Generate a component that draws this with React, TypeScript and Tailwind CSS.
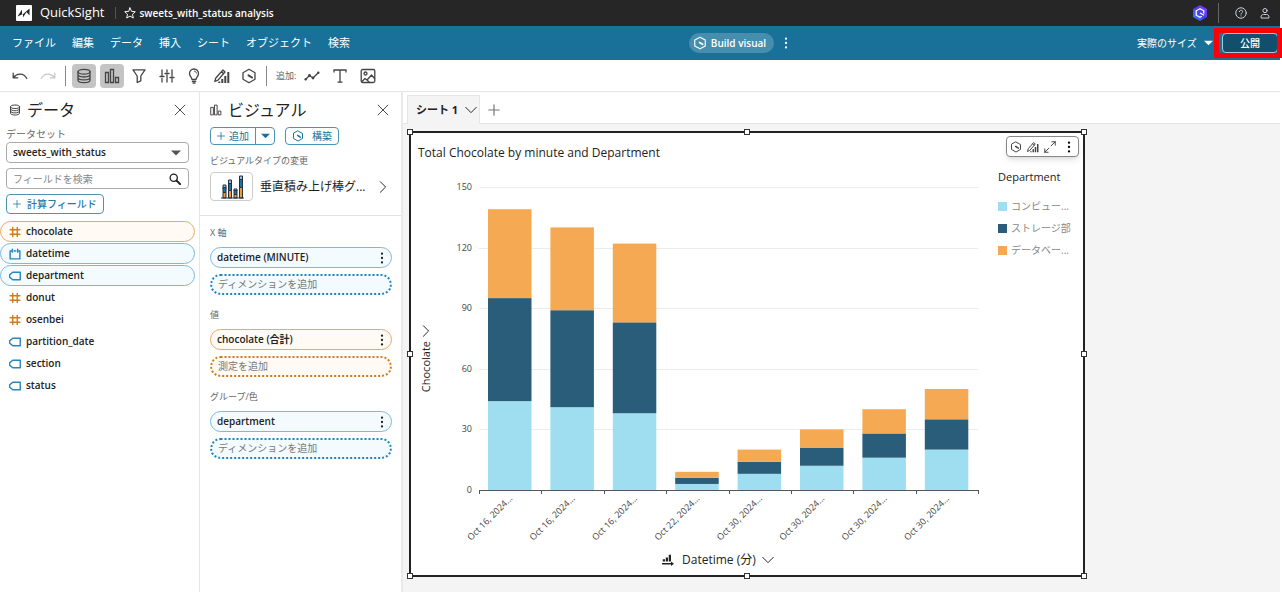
import type { ReactNode } from 'react';

interface IconProps {
  className?: string;
}

function Svg({ className = 'w-4 h-4', children }: IconProps & { children: ReactNode }) {
  return (
    <svg
      viewBox="0 0 16 16"
      className={className}
      fill="none"
      stroke="currentColor"
      strokeWidth="1.3"
      strokeLinecap="round"
      strokeLinejoin="round"
      aria-hidden="true"
    >
      {children}
    </svg>
  );
}

const UndoIcon = () => (
  <Svg>
    <path d="M1.2 5.2v4.6h4.6M1.5 9.5C4.5 5.5 11.5 4 14.8 10.5" />
  </Svg>
);

const RedoIcon = () => (
  <Svg>
    <path d="M14.8 5.2v4.6h-4.6M14.5 9.5C11.5 5.5 4.5 4 1.2 10.5" />
  </Svg>
);

const DatabaseIcon = ({ className }: IconProps) => (
  <Svg className={className}>
    <ellipse cx="8" cy="3.7" rx="6" ry="2.4" />
    <path d="M2 3.7v8.6c0 1.3 2.7 2.4 6 2.4s6-1.1 6-2.4V3.7M2 6.6C2 7.9 4.7 9 8 9s6-1.1 6-2.4M2 9.5c0 1.3 2.7 2.4 6 2.4s6-1.1 6-2.4" />
  </Svg>
);

const BarsIcon = ({ className }: IconProps) => (
  <Svg className={className}>
    <path d="M1.5 4.5h3v10h-3zM6.500 1.500h3v13h-3zM11.500 9.500h3v5h-3z" strokeLinejoin="miter" />
  </Svg>
);

const FilterIcon = () => (
  <Svg>
    <path d="M2 1.8h12L9.8 8v4.8l-3.6 1.7V8z" />
  </Svg>
);

const SlidersIcon = () => (
  <Svg>
    <path d="M3 2v5.500M3 10.500V14M1 8.500h4M8 2v2M8 7v7M6 5.500h4M13 2v6M13 11v3M11 9.500h4" />
  </Svg>
);

const BulbIcon = () => (
  <Svg>
    <path d="M6 11.500C6 9.500 3.500 8.500 3.500 5.500a4.500 4.500 0 0 1 9 0c0 3-2.500 4-2.500 6zM6.300 13.300h3.400M7 15h2" />
    <path d="M8.500 3.200c1 .1 1.700.8 1.900 1.800" strokeWidth="1" />
  </Svg>
);

const PencilChartIcon = ({ className }: IconProps) => (
  <Svg className={className}>
    <path d="M.8 13.500l1-3.500L9 2l2 2-7 8.200zM7.500 3.700l2 2" />
    <path d="M14.300 4v11M11.300 8v7M8.300 11v4M5.300 13.500V15" strokeWidth="2" strokeLinecap="butt" />
  </Svg>
);

const HexIcon = ({ className }: IconProps) => (
  <Svg className={className}>
    <path d="M8 1.300l6 3.400v6.600l-6 3.400-6-3.400V4.700z" />
    <path d="M7.500 7.300l3.500 2.200" strokeWidth="2" />
  </Svg>
);

const LineIcon = () => (
  <Svg>
    <path d="M1.500 11.500l4-4 3.500 2.500 5.500-5.500" />
    <g fill="currentColor" stroke="none">
      <circle cx="1.700" cy="11.300" r="1.200" />
      <circle cx="5.500" cy="7.500" r="1.400" />
      <circle cx="9" cy="10" r="1.400" />
      <circle cx="14.300" cy="4.700" r="1.200" />
    </g>
  </Svg>
);

const TypeIcon = () => (
  <Svg>
    <path d="M2 4.500V2h12v2.500M8 2v12.200M5.500 14.200h5" strokeLinecap="butt" strokeLinejoin="miter" />
  </Svg>
);

const ImageIcon = () => (
  <Svg>
    <rect x="1.200" y="1.500" width="13.600" height="13" rx="1.500" />
    <circle cx="5.500" cy="5.500" r="1.500" />
    <path d="M2 13.500l3-3 2 1.500L11.500 7l3 3.500M7 12l2 2" />
  </Svg>
);

const CloseIcon = () => (
  <Svg className="w-3 h-3">
    <path d="M1.500 1.500l13 13M14.500 1.500l-13 13" />
  </Svg>
);

const PlusIcon = ({ className = 'w-3 h-3' }: IconProps) => (
  <Svg className={className}>
    <path d="M8 1v14M1 8h14" strokeWidth="1.600" />
  </Svg>
);

const ChevronDown = () => (
  <Svg className="w-3 h-3">
    <path d="M1 4.500l7 7 7-7" />
  </Svg>
);

const ChevronRight = () => (
  <Svg className="w-3 h-3">
    <path d="M4.500 1l7 7-7 7" />
  </Svg>
);

const CaretDown = ({ className }: IconProps) => (
  <svg viewBox="0 0 10 6" className={className} fill="currentColor" aria-hidden="true">
    <path d="M0 .5h10L5 5.500z" />
  </svg>
);

const DotsIcon = ({ className = 'w-4 h-4' }: IconProps) => (
  <svg viewBox="0 0 16 16" className={className} fill="currentColor" aria-hidden="true">
    <circle cx="8" cy="3" r="1.300" />
    <circle cx="8" cy="8" r="1.300" />
    <circle cx="8" cy="13" r="1.300" />
  </svg>
);

const ExpandIcon = () => (
  <Svg className="w-3 h-3">
    <path d="M9.500 6.500L15 1M10.500 1H15v4.500M6.500 9.500L1 15M5.500 15H1v-4.500" />
  </Svg>
);

const SearchIcon = () => (
  <Svg className="w-3 h-3">
    <circle cx="6.300" cy="6.300" r="4.800" strokeWidth="1.800" />
    <path d="M10 10l5 5" strokeWidth="2.400" />
  </Svg>
);

const HashIcon = () => (
  <Svg className="w-3 h-3 text-[#d17c1b]">
    <path d="M5 2v12M11 2v12M1.500 5h13M1.500 11h13" strokeWidth="1.900" />
  </Svg>
);

const CalendarIcon = () => (
  <Svg className="w-3 h-3 text-[#2a86bd]">
    <path d="M4.500 4H1.500v10.500h13V4h-3M7 4h2M4.500 1.500v4M11.500 1.500v4" strokeWidth="1.900" />
  </Svg>
);

const TagIcon = () => (
  <Svg className="w-3 h-3 text-[#2a86bd]">
    <path d="M5 3h10v10H5L.8 9.500v-3z" strokeWidth="1.900" />
  </Svg>
);

const LogoIcon = () => (
  <svg viewBox="0 0 16 16" className="w-4 h-4" aria-hidden="true">
    <rect width="16" height="16" rx="1" fill="#fff" />
    <path d="M1.500 11.500L6 4.500v5.500l7.500-6.500v7l-3-3.500-3.500 5.500V9z" fill="#262626" />
  </svg>
);

const StarIcon = () => (
  <Svg className="w-3 h-3">
    <path d="M8 1.200l2.100 4.600 4.900.5-3.700 3.400 1.100 5L8 12.100l-4.400 2.600 1.100-5L1 6.300l4.900-.5z" />
  </Svg>
);

const AssistantIcon = () => (
  <svg viewBox="0 0 16 16" className="w-4 h-4" fill="none" aria-hidden="true">
    <defs>
      <linearGradient id="assistant" x1="0" y1="1" x2="1" y2="0">
        <stop offset="0" stopColor="#2f8bff" />
        <stop offset="0.500" stopColor="#4a3df0" />
        <stop offset="1" stopColor="#8a3dfa" />
      </linearGradient>
    </defs>
    <path d="M8 0l7 4v8l-7 4-7-4V4z" fill="url(#assistant)" />
    <path d="M11.800 8.500V5.800L8 3.700 4.200 5.800v4.400L8 12.300l1.800-1M8 8l4 2.300" stroke="#fff" strokeWidth="1.300" />
  </svg>
);

const HelpIcon = () => (
  <Svg className="w-3 h-3">
    <circle cx="8" cy="8" r="7" />
    <path d="M5.800 6.300C5.800 3.500 10.300 3.700 10.200 6.200 10.100 7.800 8 7.800 8 9.500M8 11.800v.2" />
  </Svg>
);

const UserIcon = () => (
  <Svg className="w-3 h-3">
    <circle cx="8" cy="4.800" r="2.800" />
    <path d="M2.800 14.200V13c0-2 1.500-3 3.200-3h4c1.700 0 3.200 1 3.200 3v1.200z" />
  </Svg>
);

const StackedIcon = () => (
  <svg viewBox="0 0 24 24" className="w-6 h-6" aria-hidden="true">
    <g stroke="#233040" strokeWidth="1">
      <path d="M3 10h3v4H3zM8.500 5h3v5h-3zM14 14h3v2h-3zM19.500 1h3v5h-3z" fill="#8fc1e3" />
      <path d="M3 12.500h3v5H3zM8.500 8.500h3v7h-3zM14 15.500h3v4h-3zM19.500 4.500h3v8h-3z" fill="#1d6fa8" />
      <path d="M3 17.500h3V23H3zM8.500 15.500h3V23h-3zM14 19.500h3V23h-3zM19.500 12.500h3V23h-3z" fill="#f39b32" />
      <path d="M1 23h23" />
    </g>
  </svg>
);

const AxisIcon = () => (
  <svg viewBox="0 0 16 16" className="w-3 h-3" fill="currentColor" aria-hidden="true">
    <path d="M1 7h3v3H1zM5 4.500h3V10H5zM9 1h3v9H9zM0 12h12v-2l4 3-4 3v-2H0z" />
  </svg>
);

const menus = ['ファイル', '編集', 'データ', '挿入', 'シート', 'オブジェクト', '検索'];

const tools = [
  { label: 'データ', icon: <DatabaseIcon />, active: true },
  { label: 'ビジュアル', icon: <BarsIcon />, active: true },
  { label: 'フィルター', icon: <FilterIcon />, active: false },
  { label: 'パラメータ', icon: <SlidersIcon />, active: false },
  { label: 'インサイト', icon: <BulbIcon />, active: false },
  { label: 'プロパティ', icon: <PencilChartIcon />, active: false },
  { label: 'Q', icon: <HexIcon />, active: false },
];

const fields = [
  { name: 'chocolate', icon: <HashIcon />, style: 'border-[#e5ab66] bg-[#fffbf4]' },
  { name: 'datetime', icon: <CalendarIcon />, style: 'border-[#7db9dc] bg-[#f3fbff]' },
  { name: 'department', icon: <TagIcon />, style: 'border-[#7db9dc] bg-[#f3fbff]' },
  { name: 'donut', icon: <HashIcon />, style: 'border-transparent' },
  { name: 'osenbei', icon: <HashIcon />, style: 'border-transparent' },
  { name: 'partition_date', icon: <TagIcon />, style: 'border-transparent' },
  { name: 'section', icon: <TagIcon />, style: 'border-transparent' },
  { name: 'status', icon: <TagIcon />, style: 'border-transparent' },
];

const wells = [
  { title: 'X 軸', value: 'datetime (MINUTE)', add: 'ディメンションを追加', measure: false },
  { title: '値', value: 'chocolate (合計)', add: '測定を追加', measure: true },
  { title: 'グループ/色', value: 'department', add: 'ディメンションを追加', measure: false },
];

const legend = [
  { name: 'コンピュー...', color: 'bg-[#9fdef0]' },
  { name: 'ストレージ部', color: 'bg-[#295d79]' },
  { name: 'データベー...', color: 'bg-[#f6a953]' },
];

const bars = [
  { label: 'Oct 16, 2024...', values: [44, 51, 44] },
  { label: 'Oct 16, 2024...', values: [41, 48, 41] },
  { label: 'Oct 16, 2024...', values: [38, 45, 39] },
  { label: 'Oct 22, 2024...', values: [3, 3, 3] },
  { label: 'Oct 30, 2024...', values: [8, 6, 6] },
  { label: 'Oct 30, 2024...', values: [12, 9, 9] },
  { label: 'Oct 30, 2024...', values: [16, 12, 12] },
  { label: 'Oct 30, 2024...', values: [20, 15, 15] },
];

const colors = ['#9fdef0', '#295d79', '#f6a953'];

function Header() {
  return (
    <header className="flex h-[26px] items-center justify-between bg-[#262626] text-white">
      <div className="flex items-center pl-4">
        <LogoIcon />
        <span className="ml-2 text-[13px]">QuickSight</span>
        <span className="ml-[10px] mr-2 h-3 w-px bg-[#555]" />
        <StarIcon />
        <span className="ml-1 text-[10px] font-semibold">sweets_with_status analysis</span>
      </div>
      <div className="flex items-center pr-[9px]">
        <AssistantIcon />
        <span className="ml-[10px] h-5 w-px bg-[#666]" />
        <button aria-label="ヘルプ" className="ml-4 text-gray-300"><HelpIcon /></button>
        <button aria-label="ユーザー" className="ml-3 text-gray-300"><UserIcon /></button>
      </div>
    </header>
  );
}

function MenuBar() {
  return (
    <div className="flex h-[34px] items-center bg-[#19719a] text-white">
      <nav className="flex gap-4 pl-3 text-[11px]">
        {menus.map((m) => (
          <button key={m}>{m}</button>
        ))}
      </nav>
      <div className="flex flex-1 items-center justify-center pr-1">
        <button className="flex h-5 items-center gap-1 rounded-full bg-[#478eae] px-1 pr-2 text-[10px] font-semibold">
          <HexIcon className="h-[14px] w-[14px]" />
          Build visual
        </button>
        <button aria-label="その他" className="ml-1"><DotsIcon className="h-[14px] w-4" /></button>
      </div>
      <div className="flex items-center justify-end pr-[2px]">
        <label className="relative mr-[9px] flex items-center">
          <select aria-label="表示サイズ" className="w-[76px] appearance-none bg-transparent text-[10px] outline-none">
            <option>実際のサイズ</option>
          </select>
          <CaretDown className="pointer-events-none absolute right-0 h-[6px] w-[9px]" />
        </label>
        <div className="relative">
          <button className="block h-5 w-14 rounded border border-[#a9c9d8] bg-[#124f6c] text-[10px] font-medium">公開</button>
          <span className="pointer-events-none absolute -inset-y-[5px] -left-2 -right-1 border-5 border-[#fb0007]" />
        </div>
      </div>
    </div>
  );
}

function Toolbar() {
  return (
    <div className="flex h-8 items-center border-b border-[#e6e6e6] pl-3 text-[#444]">
      <button aria-label="元に戻す"><UndoIcon /></button>
      <button aria-label="やり直す" className="ml-3 text-[#c8c8c8]"><RedoIcon /></button>
      <span className="ml-[9px] mr-[6px] h-5 w-px bg-[#888]" />
      <div className="flex w-[189px] justify-between">
        {tools.map((t) => (
          <button
            key={t.label}
            aria-label={t.label}
            className={`flex h-6 w-6 items-center justify-center rounded-sm ${t.active ? 'bg-[#c4c4c4]' : ''}`}
          >
            {t.icon}
          </button>
        ))}
      </div>
      <span className="ml-[5px] mr-[9px] h-5 w-px bg-[#888]" />
      <span className="mr-2 text-[9px] text-[#666]">追加:</span>
      <div className="flex gap-3">
        <button aria-label="線"><LineIcon /></button>
        <button aria-label="テキスト"><TypeIcon /></button>
        <button aria-label="画像"><ImageIcon /></button>
      </div>
    </div>
  );
}

function PanelTitle({ icon, title }: { icon: ReactNode; title: string }) {
  return (
    <div className="flex h-6 items-center text-[#444]">
      {icon}
      <h2 className="ml-[6px] flex-1 text-base text-[#222]">{title}</h2>
      <button aria-label="閉じる"><CloseIcon /></button>
    </div>
  );
}

function DataPanel() {
  return (
    <aside className="w-[200px] shrink-0 border-r border-[#e6e6e6] pt-[6px]">
      <div className="pl-[9px] pr-[13px]">
        <PanelTitle icon={<DatabaseIcon className="w-3 h-3" />} title="データ" />
      </div>
      <div className="pl-[6px] pr-[10px]">
        <label htmlFor="dataset" className="mt-1 block text-[10px] leading-4 text-[#666]">データセット</label>
        <div className="relative flex items-center">
          <select id="dataset" className="h-[21px] w-full appearance-none rounded border border-[#aaa] px-[6px] text-[10px] font-semibold text-[#222]">
            <option>sweets_with_status</option>
          </select>
          <CaretDown className="pointer-events-none absolute right-2 h-[6px] w-[10px] text-[#555]" />
        </div>
        <div className="relative mt-[5px] flex items-center">
          <input
            type="text"
            aria-label="フィールドを検索"
            placeholder="フィールドを検索"
            className="h-[21px] w-full rounded border border-[#aaa] px-[6px] text-[10px] placeholder:text-[#888]"
          />
          <span className="pointer-events-none absolute right-2"><SearchIcon /></span>
        </div>
        <button className="mt-[5px] flex h-5 items-center gap-[6px] rounded-sm border border-[#4c94b5] px-[6px] text-[10px] font-medium text-[#277ca3]">
          <PlusIcon className="h-2 w-2" />
          計算フィールド
        </button>
      </div>
      <ul className="mt-[7px] space-y-px pr-1">
        {fields.map((f) => (
          <li key={f.name} className={`flex h-[21px] items-center gap-[5px] rounded-full border pl-2 text-[10px] font-semibold ${f.style}`}>
            {f.icon}
            {f.name}
          </li>
        ))}
      </ul>
    </aside>
  );
}

function Well({ title, value, add, measure }: { title: string; value: string; add: string; measure: boolean }) {
  return (
    <div>
      <div className="text-[9px] leading-4 text-[#666]">{title}</div>
      <div
        className={`mt-[6px] flex h-[21px] items-center justify-between rounded-full border pl-[6px] pr-px text-[10px] font-semibold ${
          measure ? 'border-[#e5ab66] bg-[#fffbf4]' : 'border-[#7db9dc] bg-[#f3fbff]'
        }`}
      >
        {value}
        <button aria-label="メニュー"><DotsIcon className="h-[14px] w-4" /></button>
      </div>
      <button
        className={`mt-[6px] flex h-[21px] w-full items-center rounded-full border-2 border-dotted pl-[6px] text-[10px] text-[#777] ${
          measure ? 'border-[#cf7d19] bg-[#fffbf4]' : 'border-[#2383bb] bg-[#f3fbff]'
        }`}
      >
        {add}
      </button>
    </div>
  );
}

function VisualPanel() {
  return (
    <aside className="w-[203px] shrink-0 border-r-2 border-[#e9e9e9] pt-[6px]">
      <div className="border-b border-[#e2e2e2] pb-[14px] pl-[10px] pr-3">
        <PanelTitle icon={<BarsIcon className="w-3 h-3" />} title="ビジュアル" />
        <div className="mt-[5px] flex gap-[10px] text-[10px] text-[#19719a]">
          <div className="flex h-[18px] rounded-sm border border-[#4c94b5]">
            <button className="flex w-[45px] items-center justify-center gap-1 border-r border-[#4c94b5]">
              <PlusIcon className="h-2 w-2" />
              追加
            </button>
            <button aria-label="追加オプション" className="flex w-[18px] items-center justify-center">
              <CaretDown className="h-[6px] w-[9px]" />
            </button>
          </div>
          <button className="flex h-[18px] w-[54px] items-center justify-center gap-2 rounded-sm border border-[#4c94b5]">
            <HexIcon className="w-3 h-3" />
            構築
          </button>
        </div>
        <div className="mt-2 text-[9px] leading-4 text-[#666]">ビジュアルタイプの変更</div>
        <button className="mt-[3px] flex w-full items-center text-left">
          <span className="flex h-[29px] w-[43px] items-center justify-center rounded border border-[#ccc]"><StackedIcon /></span>
          <span className="ml-[7px] flex-1 text-xs text-[#222]">垂直積み上げ棒グ...</span>
          <ChevronRight />
        </button>
      </div>
      <div className="space-y-[12px] pl-[10px] pr-[9px] pt-[9px]">
        {wells.map((w) => (
          <Well key={w.title} {...w} />
        ))}
      </div>
    </aside>
  );
}

function Chart() {
  const left = 38;
  const bottom = 327;
  const band = 62.4;
  const unit = 2.02;

  return (
    <svg viewBox="0 0 545 384" className="h-[384px] w-[545px] shrink-0 overflow-visible" role="img" aria-label="Total Chocolate by minute and Department">
      {[0, 30, 60, 90, 120, 150].map((tick) => (
        <g key={tick}>
          {tick > 0 && <path d={`M${left} ${Math.round(bottom - tick * unit)}.5h499`} stroke="#ececec" />}
          <text x="31" y={bottom - tick * unit + 3} textAnchor="end" className="fill-[#444] text-[9px] font-medium">{tick}</text>
        </g>
      ))}
      {bars.map((bar, i) => {
        const x = left + i * band + 9;
        let sum = 0;
        return (
          <g key={i}>
            {bar.values.map((v, j) => {
              sum += v;
              return <rect key={j} x={x} y={bottom - sum * unit} width="43.500" height={v * unit} fill={colors[j]} />;
            })}
            <text
              textAnchor="end"
              transform={`translate(${x + 25} 336) rotate(-45)`}
              className="fill-[#444] text-[9px] font-medium"
            >
              {bar.label}
            </text>
          </g>
        );
      })}
      <path d={`M${left} ${bottom + 0.5}h499`} stroke="#555" />
      {[0, 1, 2, 3, 4, 5, 6, 7, 8].map((n) => (
        <path key={n} d={`M${Math.round(left + n * band)}.5 ${bottom}v4`} stroke="#555" />
      ))}
    </svg>
  );
}

function Handles() {
  const handle = 'absolute h-[6px] w-[6px] border border-[#333] bg-white';
  return (
    <div className="pointer-events-none">
      <span className={`${handle} -left-1 -top-1`} />
      <span className={`${handle} left-1/2 -top-1 -translate-x-1/2`} />
      <span className={`${handle} -right-1 -top-1`} />
      <span className={`${handle} -left-1 top-1/2 -translate-y-1/2`} />
      <span className={`${handle} -right-1 top-1/2 -translate-y-1/2`} />
      <span className={`${handle} -bottom-1 -left-1`} />
      <span className={`${handle} -bottom-1 left-1/2 -translate-x-1/2`} />
      <span className={`${handle} -bottom-1 -right-1`} />
    </div>
  );
}

function Visual() {
  return (
    <section className="relative w-[676px] border-2 border-[#222] bg-white pb-[2px] pt-[10px]">
      <h3 className="pl-[7px] text-xs leading-5 text-[#222]">Total Chocolate by minute and Department</h3>
      <div className="flex">
        <div className="flex w-[30px] flex-col items-center justify-center gap-1 pt-2 text-[#222]">
          <ChevronRight />
          <span className="rotate-180 text-[11px] leading-4 [writing-mode:vertical-rl]">Chocolate</span>
        </div>
        <Chart />
        <div className="pl-3 pt-1">
          <h4 className="text-[11px] font-medium leading-5 text-[#222]">Department</h4>
          <ul className="mt-2">
            {legend.map((l) => (
              <li key={l.name} className="flex h-[22px] items-center gap-1 whitespace-nowrap text-[10px] text-[#888]">
                <span className={`h-[9px] w-[9px] ${l.color}`} />
                {l.name}
              </li>
            ))}
          </ul>
        </div>
      </div>
      <div className="flex h-[26px] items-center pl-[251px] text-[#222]">
        <AxisIcon />
        <span className="ml-2 mr-[6px] text-xs">Datetime (分)</span>
        <ChevronDown />
      </div>
      <div className="absolute right-1 top-[3px] flex h-[21px] w-[73px] items-center justify-between rounded-sm border border-[#888] bg-white pl-[3px] pr-px text-[#444] shadow-md">
        <button aria-label="Q"><HexIcon className="w-3 h-3" /></button>
        <button aria-label="編集"><PencilChartIcon className="w-3 h-3" /></button>
        <button aria-label="拡大"><ExpandIcon /></button>
        <button aria-label="メニュー" className="text-black"><DotsIcon className="h-[14px] w-4" /></button>
      </div>
      <Handles />
    </section>
  );
}

function Sheet() {
  return (
    <main className="flex min-w-0 flex-1 flex-col">
      <div className="flex h-8 items-end border-b border-[#e6e6e6] pl-1">
        <button className="-mb-px flex h-[29px] items-center gap-[7px] border border-b-0 border-[#e6e6e6] bg-[#f4f4f4] pl-2 pr-[2px] text-[11px] font-bold text-[#222]">
          シート 1
          <ChevronDown />
        </button>
        <button aria-label="シートを追加" className="mb-[7px] ml-2 text-[#777]"><PlusIcon /></button>
      </div>
      <div className="flex-1 bg-[#f4f4f4] pl-[6px] pt-[7px]">
        <Visual />
      </div>
    </main>
  );
}

export default function App() {
  return (
    <div className="mr-[2px] flex min-h-screen flex-col bg-white font-['Open_Sans','Noto_Sans_CJK_JP',sans-serif] text-[#222]">
      <Header />
      <MenuBar />
      <Toolbar />
      <div className="flex flex-1">
        <DataPanel />
        <VisualPanel />
        <Sheet />
      </div>
    </div>
  );
}
